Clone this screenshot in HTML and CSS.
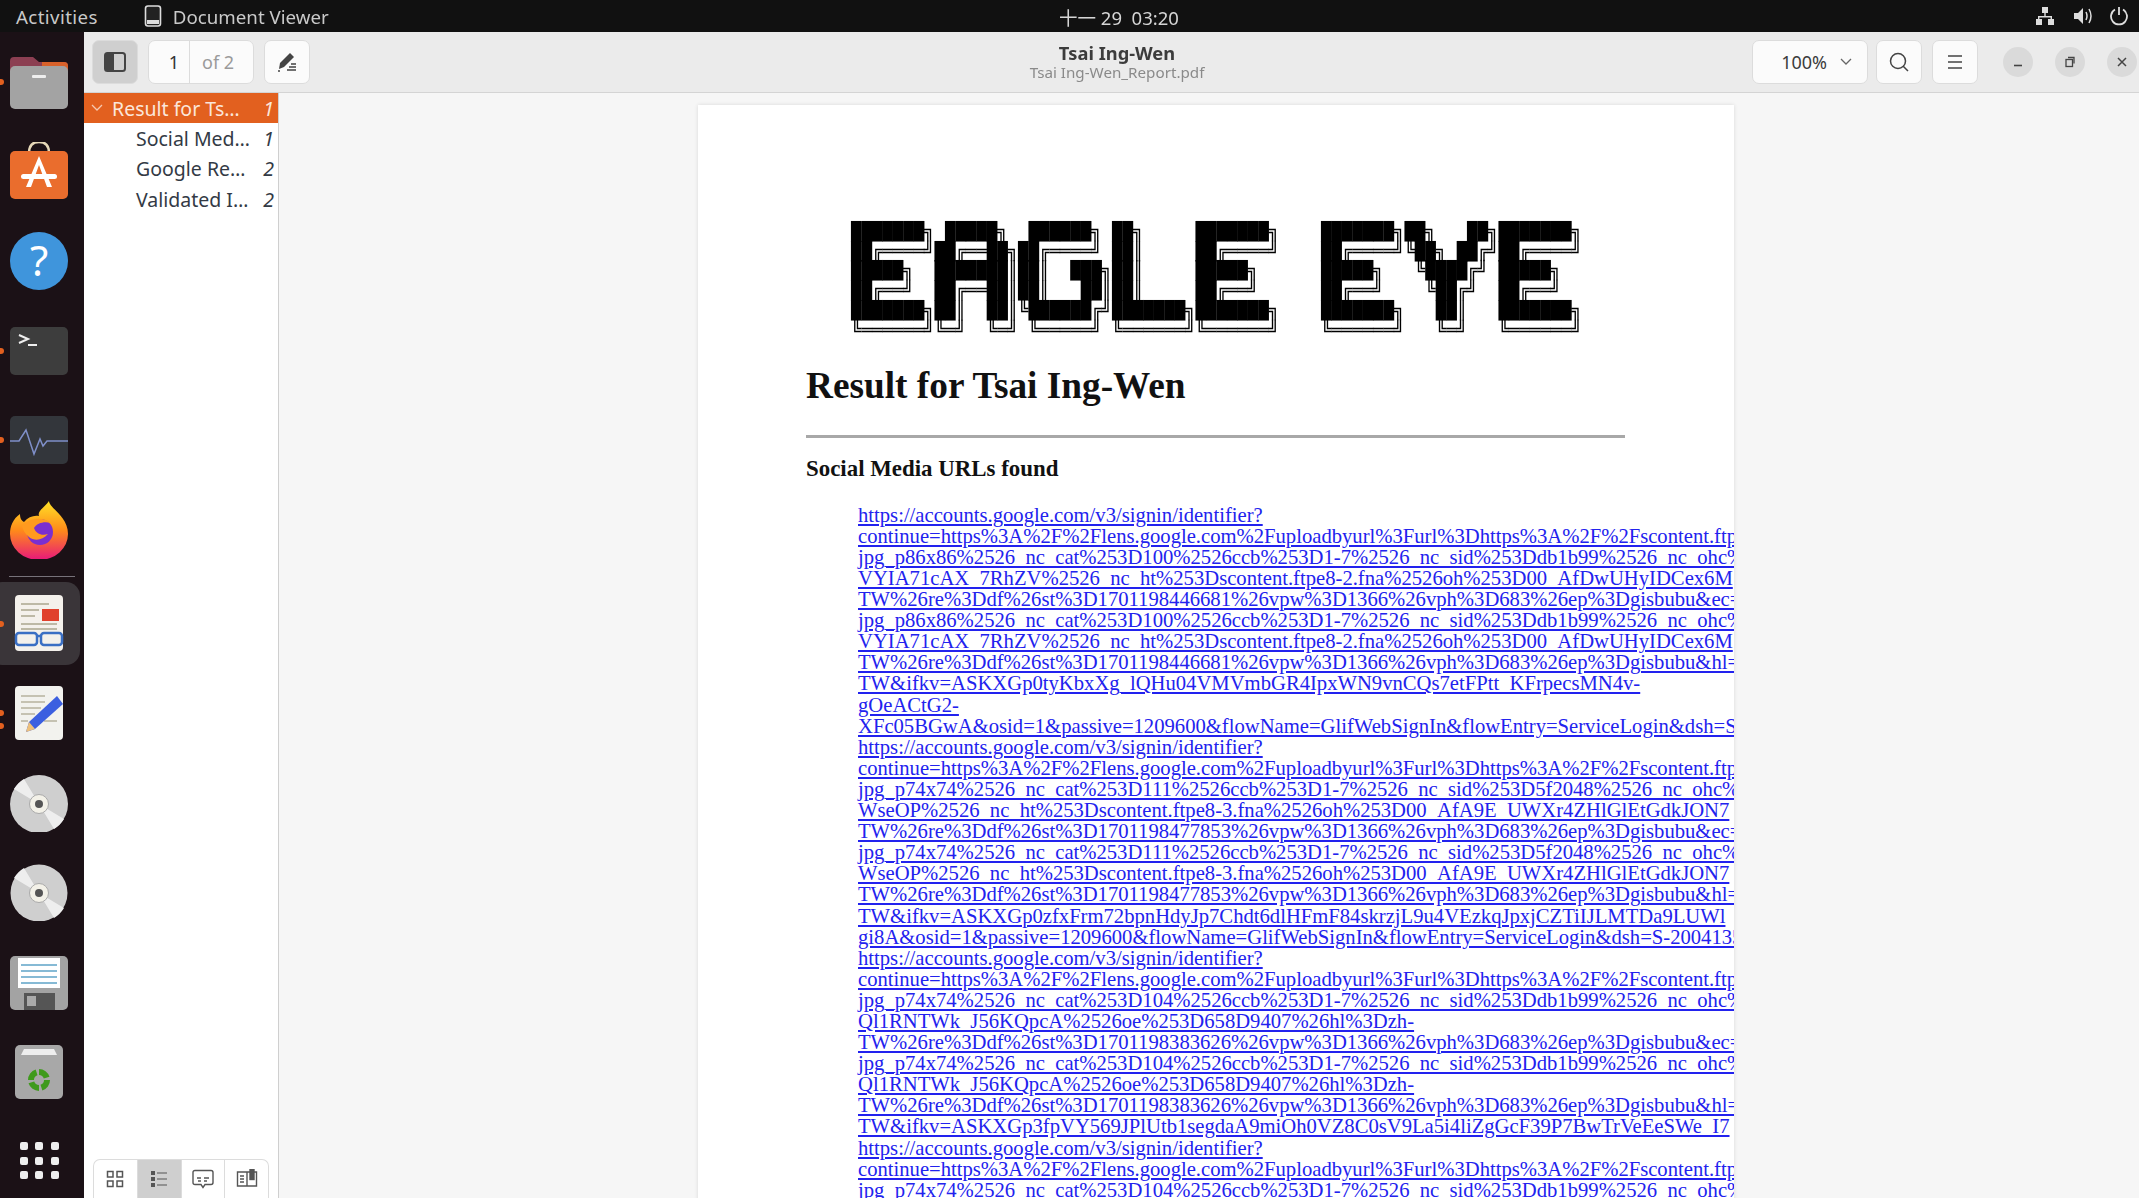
FILE: index.html
```html
<!DOCTYPE html>
<html lang="en">
<head>
	<meta charset="UTF-8">
	<title>Document Viewer</title>
	<link rel="stylesheet" href="styles.css">
</head>
<body>

<div class="topbar">
	<span class="activities">Activities</span>
	<span class="app-name">
		<svg class="app-icon" viewBox="0 0 18 22"><rect x="1.500" y="1" width="15" height="20" rx="2.500" fill="#222" stroke="#ddd" stroke-width="1.600"/><rect x="3" y="15" width="12" height="4" fill="#ddd"/></svg>
		Document Viewer
	</span>
	<span class="clock">十一 29&nbsp; 03:20</span>
	<span class="tray">
		<svg width="22" height="22" viewBox="0 0 22 22" fill="#ddd"><rect x="8" y="2" width="6" height="6"/><rect x="2" y="14" width="6" height="6"/><rect x="14" y="14" width="6" height="6"/><path d="M10.300 8h1.400v3H18v3h-1.400v-1.600H5.400V14H4v-3h6.300z"/></svg>
		<svg width="22" height="22" viewBox="0 0 22 22"><path d="M3 8h4l5-5v16l-5-5H3z" fill="#ddd"/><path d="M15 7q2 4 0 8M18 4q4 7 0 14" fill="none" stroke="#ddd" stroke-width="1.500"/></svg>
		<svg width="22" height="22" viewBox="0 0 22 22" fill="none" stroke="#ddd" stroke-width="1.800"><path d="M7 4.500a8 8 0 1 0 8 0M11 2v8"/></svg>
	</span>
</div>

<div class="desktop">
	<nav class="dock">
		<div class="dock-item"><i class="dot"></i>
			<svg viewBox="0 0 58 58" class="dock-icon"><path d="M0 8q0-4 4-4h19l6 5h25q4 0 4 4v14H0z" fill="#8c3f52"/><path d="M32 9h22q4 0 4 4v6H32z" fill="#d9622b"/><rect y="13" width="58" height="43" rx="5" fill="#a3a3a3"/><rect x="22" y="22" width="14" height="3" rx="1" fill="#eee"/></svg>
		</div>
		<div class="dock-item">
			<svg viewBox="0 0 58 58" class="dock-icon"><path d="M19 11q0-11 10-11t10 11" fill="none" stroke="#e6d8b8" stroke-width="2.500"/><rect y="9" width="58" height="48" rx="5" fill="#ea6d2d"/><path d="M29 14l-13 31h5l8-22 8 22h5z" fill="#fff"/><rect x="11" y="32" width="36" height="5" rx="2.500" fill="#fff"/></svg>
		</div>
		<div class="dock-item">
			<svg viewBox="0 0 58 58" class="dock-icon"><circle cx="29" cy="29" r="29" fill="#3f95dc"/><text x="29" y="44" class="help-mark">?</text></svg>
		</div>
		<div class="dock-item"><i class="dot"></i>
			<svg viewBox="0 0 58 58" class="dock-icon"><rect y="5" width="58" height="48" rx="5" fill="#3d3d3d"/><path d="M9 13l9 4-9 4" fill="none" stroke="#eee" stroke-width="2"/><rect x="18" y="22" width="9" height="2" fill="#eee"/></svg>
		</div>
		<div class="dock-item"><i class="dot"></i>
			<svg viewBox="0 0 58 58" class="dock-icon"><rect y="5" width="58" height="48" rx="5" fill="#33363b"/><path d="M0 30h9l7-11 8 24 6-15 3 7 4-5h21" fill="none" stroke="#7f8fc9" stroke-width="1.500"/></svg>
		</div>
		<div class="dock-item">
			<svg viewBox="0 0 58 58" class="dock-icon"><defs><linearGradient id="ff" x1="0" y1="0" x2="0" y2="1"><stop offset="0" stop-color="#ffe226"/><stop offset=".5" stop-color="#ff8a1a"/><stop offset="1" stop-color="#e8187a"/></linearGradient></defs><path d="M39 0c0 7 19 15 19 33a29 26 0 0 1-58 0c0-8 3-15 10-20 0 5 2 7 4 8 4-5 10-7 15-6-2-5 6-9 10-15z" fill="url(#ff)"/><circle cx="30" cy="31" r="13" fill="#7a2fd0"/><path d="M12 25c8-9 22-9 29-3-7-2-14 0-17 5 2 6 8 8 14 6-6 7-14 7-19 3-4-3-6-7-7-11z" fill="#ff9a1f"/></svg>
		</div>
		<div class="dock-sep"></div>
		<div class="dock-item active"><i class="dot"></i>
			<svg viewBox="0 0 58 58" class="dock-icon"><rect x="5" y="1" width="48" height="56" rx="4" fill="#f4f1ec"/><path d="M11 10h28M11 16h18M11 22h14M11 30h36M11 35h36" stroke="#bdb9a6" stroke-width="2.200"/><rect x="32" y="15" width="17" height="12" fill="#e0402c"/><rect x="6" y="39" width="21" height="12" rx="3" fill="none" stroke="#3a6fc4" stroke-width="2.500"/><rect x="31" y="39" width="21" height="12" rx="3" fill="none" stroke="#3a6fc4" stroke-width="2.500"/><path d="M27 42h4" stroke="#3a6fc4" stroke-width="2.500"/></svg>
		</div>
		<div class="dock-item"><i class="dot"></i><i class="dot dot-low"></i>
			<svg viewBox="0 0 58 58" class="dock-icon"><rect x="5" y="2" width="48" height="54" rx="4" fill="#f2f2ee"/><path d="M11 12h24M11 18h24M11 24h20M11 30h14M11 37h7M34 37h13" stroke="#c5c2b2" stroke-width="2"/><path d="M47 12l6 8-28 25-9 3 3-10z" fill="#3b5fe0"/><path d="M19 38l6 7-9 3z" fill="#eec07a"/></svg>
		</div>
		<div class="dock-item">
			<svg viewBox="0 0 58 58" class="dock-icon"><circle cx="29" cy="30" r="29" fill="#cfcfcf"/><path d="M29 30L4 15A29 29 0 0 1 14 5zM29 30L54 45A29 29 0 0 1 44 55z" fill="#eee"/><circle cx="29" cy="30" r="9.500" fill="#f3f1e8" stroke="#aaa"/><circle cx="29" cy="30" r="4" fill="#555"/></svg>
		</div>
		<div class="dock-item">
			<svg viewBox="0 0 58 58" class="dock-icon"><circle cx="29" cy="30" r="28.500" fill="#cfcfcf"/><path d="M29 30L4 15A29 29 0 0 1 14 5zM29 30L54 45A29 29 0 0 1 44 55z" fill="#eee"/><circle cx="29" cy="30" r="9.500" fill="#f3f1e8" stroke="#aaa"/><circle cx="29" cy="30" r="4" fill="#555"/></svg>
		</div>
		<div class="dock-item">
			<svg viewBox="0 0 58 58" class="dock-icon"><rect y="3" width="58" height="54" rx="5" fill="#a3a3a3"/><rect x="8" y="5" width="42" height="30" fill="#fff"/><path d="M11 12h36M11 18h36M11 24h36M11 30h36" stroke="#5fa4c8" stroke-width="1.500"/><rect x="14" y="40" width="31" height="17" fill="#555"/><rect x="17" y="43" width="9" height="10" fill="#aaa"/></svg>
		</div>
		<div class="dock-item">
			<svg viewBox="0 0 58 58" class="dock-icon"><rect x="5" y="3" width="48" height="54" rx="5" fill="#a8a8a8"/><path d="M11 13l3-6h30l3 6z" fill="#eee"/><circle cx="29" cy="38" r="8" fill="none" stroke="#3f9a1c" stroke-width="6" stroke-dasharray="10 2.500"/></svg>
		</div>
		<div class="dock-item">
			<div class="app-grid"><b></b><b></b><b></b><b></b><b></b><b></b><b></b><b></b><b></b></div>
		</div>
	</nav>

	<div class="window">
		<header class="headerbar">
			<div class="tools">
				<button class="btn btn-on">
					<svg width="22" height="20" viewBox="0 0 22 20"><rect x="1" y="1" width="20" height="18" rx="2.500" fill="none" stroke="#444" stroke-width="2"/><rect x="1" y="1" width="9" height="18" fill="#444"/></svg>
				</button>
				<div class="page-entry"><span class="page-num">1</span><span class="page-of">of 2</span></div>
				<button class="btn">
					<svg width="22" height="22" viewBox="0 0 22 22"><path d="M14 2l4 4L8 16l-5 2 1-6z" fill="#444"/><path d="M2 20h2M11 19h9M13 16h7M15 13h5" stroke="#444" stroke-width="1.300"/></svg>
				</button>
			</div>
			<div class="title-box">
				<div class="title">Tsai Ing-Wen</div>
				<div class="subtitle">Tsai Ing-Wen_Report.pdf</div>
			</div>
			<div class="tools">
				<div class="zoom-box">100%
					<svg width="14" height="10" viewBox="0 0 14 10"><path d="M2 2l5 5 5-5" fill="none" stroke="#666" stroke-width="1.300"/></svg>
				</div>
				<button class="btn">
					<svg width="22" height="22" viewBox="0 0 22 22" fill="none" stroke="#444" stroke-width="1.500"><circle cx="10" cy="10" r="7.500"/><path d="M15 15l5 5"/></svg>
				</button>
				<button class="btn">
					<svg width="18" height="16" viewBox="0 0 18 16" stroke="#444" stroke-width="1.500"><path d="M2 2h14M2 8h14M2 14h14"/></svg>
				</button>
				<div class="win-controls">
					<span class="win-btn"><svg width="12" height="12" viewBox="0 0 12 12"><path d="M2 9.500h8" stroke="#444" stroke-width="1.600"/></svg></span>
					<span class="win-btn"><svg width="12" height="12" viewBox="0 0 12 12" fill="none" stroke="#444" stroke-width="1.300"><rect x="2" y="3.500" width="6.500" height="7"/><path d="M4 1.500h6v6"/></svg></span>
					<span class="win-btn"><svg width="12" height="12" viewBox="0 0 12 12"><path d="M2 2l8 8M10 2l-8 8" stroke="#444" stroke-width="1.500"/></svg></span>
				</div>
			</div>
		</header>

		<div class="win-body">
			<aside class="sidebar">
				<ul class="outline">
					<li class="row selected"><svg class="caret" width="14" height="10" viewBox="0 0 14 10"><path d="M2 2l5 5 5-5" fill="none" stroke="#f6c8b0" stroke-width="1.300"/></svg><span class="row-name">Result for Ts…</span><em>1</em></li>
					<li class="row child"><span class="row-name">Social Med…</span><em>1</em></li>
					<li class="row child"><span class="row-name">Google Re…</span><em>2</em></li>
					<li class="row child"><span class="row-name">Validated I…</span><em>2</em></li>
				</ul>
				<div class="side-tabs">
					<div class="tab">
						<svg width="18" height="18" viewBox="0 0 18 18" fill="none" stroke="#555" stroke-width="1.500"><rect x="1.500" y="1.500" width="5.500" height="5.500"/><rect x="11" y="1.500" width="5.500" height="5.500"/><rect x="1.500" y="11" width="5.500" height="5.500"/><rect x="11" y="11" width="5.500" height="5.500"/></svg>
					</div>
					<div class="tab tab-on">
						<svg width="18" height="18" viewBox="0 0 18 18" fill="#555"><rect x="1" y="1" width="4" height="4"/><rect x="1" y="7" width="4" height="4"/><rect x="1" y="13" width="4" height="4"/><path d="M7 2.500h10v1H7zM7 8.500h10v1H7zM7 14.500h10v1H7z"/></svg>
					</div>
					<div class="tab">
						<svg width="22" height="20" viewBox="0 0 22 20" fill="none" stroke="#555" stroke-width="1.400"><path d="M3 1.500h16q2 0 2 2v10q0 2-2 2h-6l-2 3-2-3H3q-2 0-2-2v-10q0-2 2-2z"/><path d="M5 9h4M12 9h5M6 12h3M12 12h3"/></svg>
					</div>
					<div class="tab">
						<svg width="22" height="20" viewBox="0 0 22 20" fill="none" stroke="#555" stroke-width="1.400"><path d="M1.500 3h19v14h-19zM11 3v14M4 7h4M4 10h4M4 13h4"/><rect x="14" y="0.500" width="4" height="10" fill="#555"/></svg>
					</div>
				</div>
			</aside>

			<main class="viewer">
				<section class="page">
<pre class="banner">███████╗ █████╗  ██████╗ ██╗     ███████╗    ███████╗██╗   ██╗███████╗
██╔════╝██╔══██╗██╔════╝ ██║     ██╔════╝    ██╔════╝╚██╗ ██╔╝██╔════╝
█████╗  ███████║██║  ███╗██║     █████╗      █████╗   ╚████╔╝ █████╗
██╔══╝  ██╔══██║██║   ██║██║     ██╔══╝      ██╔══╝    ╚██╔╝  ██╔══╝
███████╗██║  ██║╚██████╔╝███████╗███████╗    ███████╗   ██║   ███████╗
╚══════╝╚═╝  ╚═╝ ╚═════╝ ╚══════╝╚══════╝    ╚══════╝   ╚═╝   ╚══════╝</pre>
					<h1 class="report-title">Result for Tsai Ing-Wen</h1>
					<hr class="rule">
					<h3 class="report-sub">Social Media URLs found</h3>
					<div class="urls">
						<a>https://accounts.google.com/v3/signin/identifier?</a>
						<a>continue=https%3A%2F%2Flens.google.com%2Fuploadbyurl%3Furl%3Dhttps%3A%2F%2Fscontent.ftpe8-2.fna.fbcdn.net</a>
						<a>jpg_p86x86%2526_nc_cat%253D100%2526ccb%253D1-7%2526_nc_sid%253Ddb1b99%2526_nc_ohc%253D</a>
						<a>VYIA71cAX_7RhZV%2526_nc_ht%253Dscontent.ftpe8-2.fna%2526oh%253D00_AfDwUHyIDCex6M</a>
						<a>TW%26re%3Ddf%26st%3D1701198446681%26vpw%3D1366%26vph%3D683%26ep%3Dgisbubu&amp;ec=GAZAAQ</a>
						<a>jpg_p86x86%2526_nc_cat%253D100%2526ccb%253D1-7%2526_nc_sid%253Ddb1b99%2526_nc_ohc%253D</a>
						<a>VYIA71cAX_7RhZV%2526_nc_ht%253Dscontent.ftpe8-2.fna%2526oh%253D00_AfDwUHyIDCex6M</a>
						<a>TW%26re%3Ddf%26st%3D1701198446681%26vpw%3D1366%26vph%3D683%26ep%3Dgisbubu&amp;hl=zh-</a>
						<a>TW&amp;ifkv=ASKXGp0tyKbxXg_lQHu04VMVmbGR4IpxWN9vnCQs7etFPtt_KFrpecsMN4v-</a>
						<a>gOeACtG2-</a>
						<a>XFc05BGwA&amp;osid=1&amp;passive=1209600&amp;flowName=GlifWebSignIn&amp;flowEntry=ServiceLogin&amp;dsh=S-2004135</a>
						<a>https://accounts.google.com/v3/signin/identifier?</a>
						<a>continue=https%3A%2F%2Flens.google.com%2Fuploadbyurl%3Furl%3Dhttps%3A%2F%2Fscontent.ftpe8-3.fna.fbcdn.net</a>
						<a>jpg_p74x74%2526_nc_cat%253D111%2526ccb%253D1-7%2526_nc_sid%253D5f2048%2526_nc_ohc%253D</a>
						<a>WseOP%2526_nc_ht%253Dscontent.ftpe8-3.fna%2526oh%253D00_AfA9E_UWXr4ZHlGlEtGdkJON7</a>
						<a>TW%26re%3Ddf%26st%3D1701198477853%26vpw%3D1366%26vph%3D683%26ep%3Dgisbubu&amp;ec=GAZAAQ</a>
						<a>jpg_p74x74%2526_nc_cat%253D111%2526ccb%253D1-7%2526_nc_sid%253D5f2048%2526_nc_ohc%253D</a>
						<a>WseOP%2526_nc_ht%253Dscontent.ftpe8-3.fna%2526oh%253D00_AfA9E_UWXr4ZHlGlEtGdkJON7</a>
						<a>TW%26re%3Ddf%26st%3D1701198477853%26vpw%3D1366%26vph%3D683%26ep%3Dgisbubu&amp;hl=zh-</a>
						<a>TW&amp;ifkv=ASKXGp0zfxFrm72bpnHdyJp7Chdt6dlHFmF84skrzjL9u4VEzkqJpxjCZTiIJLMTDa9LUWl</a>
						<a>gi8A&amp;osid=1&amp;passive=1209600&amp;flowName=GlifWebSignIn&amp;flowEntry=ServiceLogin&amp;dsh=S-2004135</a>
						<a>https://accounts.google.com/v3/signin/identifier?</a>
						<a>continue=https%3A%2F%2Flens.google.com%2Fuploadbyurl%3Furl%3Dhttps%3A%2F%2Fscontent.ftpe8-1.fna.fbcdn.net</a>
						<a>jpg_p74x74%2526_nc_cat%253D104%2526ccb%253D1-7%2526_nc_sid%253Ddb1b99%2526_nc_ohc%253D</a>
						<a>Ql1RNTWk_J56KQpcA%2526oe%253D658D9407%26hl%3Dzh-</a>
						<a>TW%26re%3Ddf%26st%3D1701198383626%26vpw%3D1366%26vph%3D683%26ep%3Dgisbubu&amp;ec=GAZAAQ</a>
						<a>jpg_p74x74%2526_nc_cat%253D104%2526ccb%253D1-7%2526_nc_sid%253Ddb1b99%2526_nc_ohc%253D</a>
						<a>Ql1RNTWk_J56KQpcA%2526oe%253D658D9407%26hl%3Dzh-</a>
						<a>TW%26re%3Ddf%26st%3D1701198383626%26vpw%3D1366%26vph%3D683%26ep%3Dgisbubu&amp;hl=zh-</a>
						<a>TW&amp;ifkv=ASKXGp3fpVY569JPlUtb1segdaA9miOh0VZ8C0sV9La5i4liZgGcF39P7BwTrVeEeSWe_I7</a>
						<a>https://accounts.google.com/v3/signin/identifier?</a>
						<a>continue=https%3A%2F%2Flens.google.com%2Fuploadbyurl%3Furl%3Dhttps%3A%2F%2Fscontent.ftpe8-1.fna.fbcdn.net</a>
						<a>jpg_p74x74%2526_nc_cat%253D104%2526ccb%253D1-7%2526_nc_sid%253Ddb1b99%2526_nc_ohc%253D</a>
					</div>
				</section>
			</main>
		</div>
	</div>
</div>

</body>
</html>
```

FILE: styles.css
```css
html,
body {
    margin: 0;
    height: 100%;
    overflow: hidden;
    font-family: "Noto Sans", "Noto Sans CJK SC", sans-serif;
}
body {
    display: flex;
    flex-direction: column;
    background: #1b1116;
    filter: blur(0.5px); /* the capture is soft */
}

/* top bar */
.topbar {
    height: 32px;
    flex: none;
    display: flex;
    align-items: center;
    position: relative;
    background: #111111;
    color: #c9c9c9;
    font-size: 18.700px;
}
.activities {
    margin-left: 16px;
    letter-spacing: 0.4px;
}
.app-name {
    margin-left: 46px;
    display: flex;
    align-items: center;
    gap: 11px;
}
.app-icon {
    width: 18px;
    height: 22px;
}
.clock {
    position: absolute;
    left: 1059px;
    top: 4px;
    font-size: 18.500px;
    color: #d5d5d5;
}
.tray {
    margin-left: auto;
    margin-right: 9px;
    display: flex;
    gap: 15px;
}

/* dock */
.desktop {
    flex: 1;
    display: flex;
    min-height: 0;
}
.dock {
    width: 84px;
    flex: none;
    box-sizing: border-box;
    padding: 5px 6px 0 0;
    background: #1b1116;
    overflow: hidden;
}
.dock-item {
    height: 89.600px;
    display: flex;
    align-items: center;
    justify-content: center;
    position: relative;
}
.dock-item.active::before {
    content: "";
    position: absolute;
    left: -12px;
    right: -2px;
    top: 3px;
    bottom: 3px;
    border-radius: 14px;
    background: #3a3539;
}
.dock-icon {
    width: 58px;
    height: 58px;
    position: relative;
}
.help-mark {
    font-family: "Noto Sans", sans-serif;
    font-size: 42px;
    fill: #ffffff;
    text-anchor: middle;
}
.dot {
    position: absolute;
    left: -2px;
    top: 42px;
    width: 6px;
    height: 6px;
    border-radius: 50%;
    background: #e2601f;
}
.dot-low {
    top: 55px;
}
.dock-sep {
    height: 1px;
    margin: 1px 3px 2px 9px;
    background: #77727a;
}
.app-grid {
    display: grid;
    grid-template-columns: repeat(3, 8px);
    gap: 6.500px 7.500px;
}
.app-grid b {
    height: 8px;
    border-radius: 2px;
    background: #eeeeee;
}

/* window */
.window {
    flex: 1;
    min-width: 0;
    display: flex;
    flex-direction: column;
}
.headerbar {
    height: 61px;
    flex: none;
    box-sizing: border-box;
    display: flex;
    align-items: center;
    justify-content: space-between;
    position: relative;
    padding: 0 0 0 8px;
    background: #ebebeb;
    border-bottom: 1px solid #d4d4d4;
}
.tools {
    display: flex;
    align-items: center;
    gap: 10px;
}
button {
    font: inherit;
}
.btn {
    width: 46px;
    height: 44px;
    padding: 0;
    display: flex;
    align-items: center;
    justify-content: center;
    border: 1px solid #dcdcdc;
    border-radius: 7px;
    background: #fbfbfb;
}
.btn-on {
    background: #cfcfcf;
}
.page-entry {
    display: flex;
    height: 44px;
    width: 106px;
    box-sizing: border-box;
    border: 1px solid #dcdcdc;
    border-radius: 7px;
    background: #fbfbfb;
    font-size: 18px;
    line-height: 42px;
}
.page-num {
    width: 41px;
    box-sizing: border-box;
    padding-right: 10px;
    text-align: right;
    color: #333333;
    border-right: 1px solid #dcdcdc;
}
.page-of {
    padding-left: 12px;
    color: #9a9a9a;
}
.title-box {
    position: absolute;
    left: 933px;
    width: 200px;
    text-align: center;
}
.title {
    font-size: 18.300px;
    font-weight: 700;
    line-height: 21px;
    color: #3c3c3c;
}
.subtitle {
    font-size: 15.200px;
    line-height: 19px;
    color: #8a8a8a;
}
.zoom-box {
    width: 116px;
    height: 44px;
    box-sizing: border-box;
    display: flex;
    align-items: center;
    justify-content: flex-end;
    gap: 12px;
    margin-right: -2px;
    padding-right: 14px;
    border: 1px solid #dcdcdc;
    border-radius: 7px;
    background: #fbfbfb;
    font-size: 18px;
    color: #3c3c3c;
}
.win-controls {
    display: flex;
    gap: 22px;
    margin-left: 15px;
    margin-right: 2px;
}
.win-btn {
    width: 30px;
    height: 30px;
    display: flex;
    align-items: center;
    justify-content: center;
    border-radius: 50%;
    background: #dadada;
}
.win-body {
    flex: 1;
    min-height: 0;
    display: flex;
}

/* sidebar */
.sidebar {
    width: 195px;
    flex: none;
    box-sizing: border-box;
    display: flex;
    flex-direction: column;
    justify-content: space-between;
    background: #ffffff;
    border-right: 1px solid #cfcfcf;
}
.outline {
    list-style: none;
    margin: 0;
    padding: 0;
}
.row {
    height: 30.400px;
    display: flex;
    align-items: center;
    padding-right: 4px;
    font-size: 19.500px;
    color: #333a45;
}
.row em {
    margin-left: auto;
}
.selected {
    background: #e2601f;
    color: #fbe6da;
}
.caret {
    margin: 0 8px 0 6px;
}
.child {
    padding-left: 52px;
}
.side-tabs {
    display: flex;
    height: 38px;
    margin: 0 9px;
    border: 1px solid #dcdcdc;
    border-bottom: 0;
    border-radius: 7px 7px 0 0;
    overflow: hidden;
}
.tab {
    flex: 1;
    display: flex;
    align-items: center;
    justify-content: center;
    border-right: 1px solid #dcdcdc;
}
.tab:last-child {
    border-right: 0;
}
.tab-on {
    background: #cfcfcf;
}

/* pdf page */
.viewer {
    flex: 1;
    min-width: 0;
    padding: 12px 0 0 419px;
    background: #f6f6f6;
    overflow: hidden;
}
.page {
    width: 1036px;
    height: 1200px;
    box-sizing: border-box;
    padding: 0 0 0 108px;
    background: #ffffff;
    overflow: hidden;
    box-shadow: 0 0 4px rgba(0, 0, 0, 0.12);
}
.banner {
    margin: 0;
    padding: 117px 0 0 45px;
    font-family: "DejaVu Sans Mono", monospace;
    font-size: 17.350px;
    line-height: 19.700px;
    color: #000000;
    will-change: transform; /* grey antialiasing, no colour fringes */
}
.report-title {
    margin: 23.500px 0 0;
    font-family: "Liberation Serif", serif;
    font-size: 37.300px;
    line-height: 44px;
    color: #111111;
}
.rule {
    width: 819px;
    height: 3px;
    margin: 27px 0 0;
    border: 0;
    background: #a8a8a8;
}
.report-sub {
    margin: 18.500px 0 0;
    font-family: "Liberation Serif", serif;
    font-size: 22.900px;
    line-height: 26px;
    color: #111111;
}
.urls {
    margin: 22.500px 0 0 52px;
    font-family: "Liberation Serif", serif;
    font-size: 20.650px;
    line-height: 21.090px;
    white-space: nowrap;
}
.urls a {
    display: block;
    width: max-content;
    color: #2222ee;
    text-decoration: underline;
}
```
